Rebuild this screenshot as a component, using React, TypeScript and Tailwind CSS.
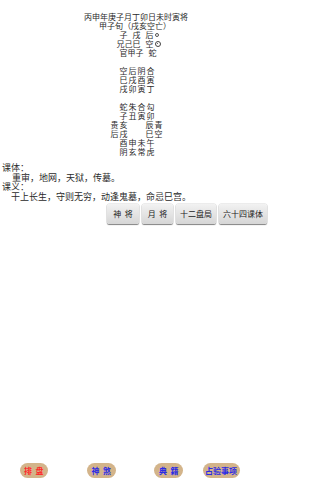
const font = "font-['Noto_Sans_CJK_SC','Noto_Sans_CJK_JP',sans-serif]";

function Row(props: { children: React.ReactNode; w?: string; between?: boolean; shift?: string }) {
  return (
    <div className={`flex h-[9px] items-center ${props.between ? "justify-between" : ""} ${props.w ?? ""} ${props.shift ?? ""}`}>
      {props.children}
    </div>
  );
}

function Chars(props: { text: string; gap?: string }) {
  return (
    <span className={`flex ${props.gap ?? "gap-[1px]"}`}>
      {props.text.split("").map((c, i) => (
        <span key={i} className="w-[8px] text-center">
          {c}
        </span>
      ))}
    </span>
  );
}

function GrayButton(props: { label: string; w: string }) {
  return (
    <button
      className={`${props.w} h-[20px] whitespace-pre rounded-[2px] bg-gradient-to-b from-[#f2f2f2] to-[#d6d6d6] text-[8px] leading-none text-[#222] shadow-[0_1px_1px_rgba(0,0,0,0.45),0_0_0_0.5px_rgba(0,0,0,0.15)]`}
    >
      {props.label}
    </button>
  );
}

function TanButton(props: { label: string; color: string; w: string; self?: string }) {
  return (
    <button
      className={`${props.w} ${props.self ?? ""} h-[15px] whitespace-pre rounded-full bg-[#d3b48a] text-[8px] font-bold leading-none ${props.color}`}
    >
      {props.label}
    </button>
  );
}

export default function App() {
  return (
    <div className={`flex h-[480px] w-[270px] flex-col bg-white text-[#2a2a2a] ${font}`}>
      <div className="flex flex-col items-center pt-[12px] text-[8px] leading-[9px]">
        <div className="h-[9px] whitespace-nowrap pl-[2px]">丙申年庚子月丁卯日未时寅将</div>
        <div className="h-[9px] whitespace-nowrap">甲子旬（戌亥空亡）</div>
        <Row shift="ml-[8px]">
          <Chars text="子" />
          <span className="ml-[5px]"><Chars text="戌" /></span>
          <span className="ml-[5px]"><Chars text="后" /></span>
          <span className="ml-[1px] h-[4px] w-[4px] rounded-full border-[0.8px] border-[#555]" />
        </Row>
        <Row shift="ml-[7px]">
          <Chars text="兄己巳" gap="gap-[0px]" />
          <span className="ml-[5px]"><Chars text="空" /></span>
          <span className="ml-[1px] flex h-[6px] w-[6px] items-center justify-center rounded-full border-[0.8px] border-[#444]">
            <span className="h-[1.5px] w-[1.5px] rounded-full bg-[#444]" />
          </span>
        </Row>
        <Row shift="ml-[6px]">
          <Chars text="官甲子" gap="gap-[0px]" />
          <span className="ml-[5px]"><Chars text="蛇" /></span>
        </Row>

        <div className="h-[9px]" />
        <Row shift="ml-[4px]"><Chars text="空后阴合" /></Row>
        <Row shift="ml-[4px]"><Chars text="巳戌酉寅" /></Row>
        <Row shift="ml-[4px]"><Chars text="戌卯寅丁" /></Row>

        <div className="h-[9px]" />
        <Row shift="ml-[4px]"><Chars text="蛇朱合勾" /></Row>
        <Row shift="ml-[4px]"><Chars text="子丑寅卯" /></Row>
        <Row w="w-[52px]" between shift="ml-[3px]">
          <Chars text="贵亥" />
          <Chars text="辰青" />
        </Row>
        <Row w="w-[52px]" between shift="ml-[3px]">
          <Chars text="后戌" />
          <Chars text="巳空" />
        </Row>
        <Row shift="ml-[4px]"><Chars text="酉申未午" /></Row>
        <Row shift="ml-[4px]"><Chars text="阴玄常虎" /></Row>
      </div>

      <div className="mt-[7px] pl-[2px] text-[9px] leading-[9.7px]">
        <div>课体：</div>
        <div className="pl-[10px]">重审，地网，天狱，传墓。</div>
        <div>课义：</div>
        <div className="pl-[9px]">干上长生，守则无穷，动逢鬼墓，命忌巳宫。</div>
      </div>

      <div className="mt-[2px] flex justify-end gap-[3px] pr-[3px]">
        <GrayButton label="神  将" w="w-[32px]" />
        <GrayButton label="月  将" w="w-[31px]" />
        <GrayButton label="十二盘局" w="w-[40px]" />
        <GrayButton label="六十四课体" w="w-[48px]" />
      </div>

      <div className="mt-auto grid grid-cols-4 justify-items-center pb-[2px]">
        <TanButton label="排  盘" color="text-[#ff2a2a]" w="w-[28px]" />
        <TanButton label="神  煞" color="text-[#2a2ae6]" w="w-[29px]" />
        <TanButton label="典  籍" color="text-[#2a2ae6]" w="w-[29px]" />
        <TanButton label="占验事项" color="text-[#2a2ae6]" w="w-[37px]" self="justify-self-start" />
      </div>
    </div>
  );
}
